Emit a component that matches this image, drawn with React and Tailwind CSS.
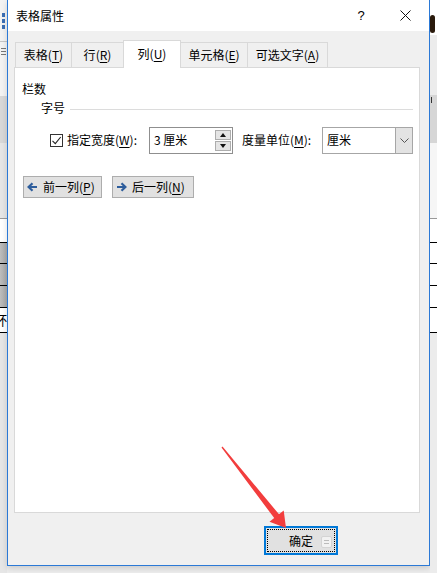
import React from 'react';

const Mn = ({ children }) => <span className="underline underline-offset-2 decoration-1">{children}</span>;

const tabs = [
  { label: '表格', key: 'T', w: 'w-[57px]' },
  { label: '行', key: 'R', w: 'w-[53px]' },
  { label: '列', key: 'U', w: 'w-[58px]', active: true },
  { label: '单元格', key: 'E', w: 'w-[68px]' },
  { label: '可选文字', key: 'A', w: 'w-[81px]' },
];

const SideLeft = () => (
  <div className="w-[7px] flex flex-col shrink-0">
    <div className="h-[41px] bg-[#f3f3f3] flex flex-col items-center gap-[2px] pt-[13px]">
      <div className="w-[3px] h-[4px] bg-[#3c6fb4]" />
      <div className="w-[3px] h-[4px] bg-[#3c6fb4]" />
      <div className="w-[3px] h-[4px] bg-[#3c6fb4]" />
    </div>
    <div className="h-px bg-[#c6c6c6]" />
    <div className="h-[54px] bg-[#f3f3f3] flex flex-col gap-[2px] pt-[6px] pl-[1px]">
      <div className="w-[5px] h-px bg-[#777]" />
      <div className="w-[5px] h-px bg-[#777]" />
      <div className="w-[5px] h-px bg-[#777]" />
    </div>
    <div className="h-[47px] bg-[#d8d8d8]" />
    <div className="h-[75px] bg-[#e6e6e6]" />
    <div className="h-px bg-[#999]" />
    <div className="h-[23px] bg-white" />
    <div className="h-px bg-black" />
    <div className="h-[20px] bg-gradient-to-r from-[#bdbdbd] to-[#a8a8a8]" />
    <div className="h-px bg-black" />
    <div className="h-[21px] bg-gradient-to-r from-[#bdbdbd] to-[#a8a8a8]" />
    <div className="h-px bg-black" />
    <div className="h-[21px] bg-gradient-to-r from-[#bdbdbd] to-[#a8a8a8]" />
    <div className="h-px bg-black" />
    <div className="h-[24px] bg-white overflow-hidden text-[13px] leading-[24px] text-black -indent-[6px]">杯</div>
    <div className="h-px bg-black" />
    <div className="flex-1 bg-[#e6e6e6]" />
  </div>
);

const SideRight = () => (
  <div className="w-[7px] flex flex-col shrink-0">
    <div className="h-[13px] bg-white" />
    <div className="h-[22px] bg-white flex items-center">
      <div className="w-[5px] h-[18px] rounded-sm bg-[#2a1a0c]" />
    </div>
    <div className="h-[60px] bg-[#ececec]" />
    <div className="h-[48px] bg-[#d6d6d6] pt-[2px]">
      <div className="w-px h-[6px] ml-[1px] bg-[#333]" />
    </div>
    <div className="h-[75px] bg-[#f6f6f6]" />
    <div className="h-px bg-[#999]" />
    <div className="h-[23px] bg-white" />
    <div className="h-px bg-black" />
    <div className="h-[20px] bg-white" />
    <div className="h-px bg-black" />
    <div className="h-[21px] bg-white" />
    <div className="h-px bg-black" />
    <div className="h-[21px] bg-white" />
    <div className="h-px bg-black" />
    <div className="h-[24px] bg-white" />
    <div className="h-px bg-black" />
    <div className="flex-1 bg-[#ececec]" />
  </div>
);

const ArrowIcon = ({ dir }) => (
  <svg width="11" height="10" viewBox="0 0 11 10" className="shrink-0">
    {dir === 'left' ? (
      <path d="M10 5H2M5.5 1.2L1.6 5l3.9 3.8" fill="none" stroke="#2d5d9c" strokeWidth="2.2" />
    ) : (
      <path d="M1 5h8M5.5 1.2L9.4 5 5.5 8.8" fill="none" stroke="#2d5d9c" strokeWidth="2.2" />
    )}
  </svg>
);

const App = () => {
  return (
    <div className="relative w-[437px] h-[573px] flex overflow-hidden bg-[#ececec] text-[12px] text-black font-['Noto_Sans_CJK_SC','Liberation_Sans',sans-serif]">
      <SideLeft />

      <div className="w-[423px] h-[566px] shrink-0 flex flex-col border-l border-r border-b border-[#2b79d6] bg-[#f0f0f0] shadow-[0_2px_6px_rgba(0,0,0,0.15)]">
        {/* title bar */}
        <div className="h-[31px] bg-white flex items-center shrink-0">
          <span className="pl-[8px] text-[12px] leading-none">表格属性</span>
          <div className="ml-auto w-[44px] h-full flex items-center justify-center text-[13px] font-['Liberation_Sans',sans-serif]">?</div>
          <div className="w-[45px] h-full mr-px flex items-center justify-center">
            <svg width="11" height="11" viewBox="0 0 11 11">
              <path d="M0.5 0.5l10 10M10.5 0.5l-10 10" stroke="#111" strokeWidth="1" />
            </svg>
          </div>
        </div>

        <div className="flex-1 flex flex-col px-[6px] pt-[9px]">
          {/* tabs */}
          <div className="h-[28px] flex items-end ml-px">
            {tabs.map((t, i) => (
              <div
                key={t.key}
                className={
                  t.active
                    ? `${t.w} h-[28px] relative z-10 -ml-px bg-white border-l border-t border-r border-[#d9d9d9] flex items-center justify-center pb-[2px]`
                    : `${t.w} h-[26px] ${i === 0 ? '' : '-ml-px'} bg-[#f0f0f0] border border-[#d9d9d9] flex items-center justify-center pb-[1px]`
                }
              >
                <span className="leading-none">
                  {t.label}(<Mn>{t.key}</Mn>)
                </span>
              </div>
            ))}
          </div>

          {/* panel */}
          <div className="-mt-px w-[406px] h-[446px] bg-white border border-[#d9d9d9] flex flex-col">
            <div className="mt-[13px] pl-[7px] h-[16px] leading-[16px]">栏数</div>

            <div className="mt-[3px] pl-[26px] pr-[6px] h-[16px] flex items-center">
              <span className="leading-[16px]">字号</span>
              <div className="ml-[5px] flex-1 h-px bg-[#dcdcdc] mt-[2px]" />
            </div>

            <div className="mt-[10px] h-[28px] flex items-center pl-[35px]">
              <div className="w-[13px] h-[13px] border border-[#333] bg-white flex items-center justify-center">
                <svg width="11" height="11" viewBox="0 0 11 11">
                  <path d="M1.5 5.8l2.8 2.8 5.4-6.6" fill="none" stroke="#222" strokeWidth="1.1" />
                </svg>
              </div>
              <span className="ml-[4px] w-[82px] leading-none">
                指定宽度(<Mn>W</Mn>):
              </span>
              <div className="w-[84px] h-[27px] border border-[#8f8f8f] bg-white flex">
                <span className="flex-1 pl-[4px] pt-[4px] leading-[16px]">3 厘米</span>
                <div className="w-[17px] flex flex-col gap-px pt-[2px] pr-[1px]">
                  <div className="h-[10px] bg-[#e5e5e5] border border-[#adadad] flex items-center justify-center">
                    <svg width="6" height="4" viewBox="0 0 6 4"><path d="M0 4h6L3 0z" fill="#111" /></svg>
                  </div>
                  <div className="h-[10px] bg-[#e5e5e5] border border-[#adadad] flex items-center justify-center">
                    <svg width="6" height="4" viewBox="0 0 6 4"><path d="M0 0h6L3 4z" fill="#111" /></svg>
                  </div>
                </div>
              </div>
              <span className="ml-[9px] w-[80px] leading-none">
                度量单位(<Mn>M</Mn>):
              </span>
              <div className="w-[91px] h-[27px] border border-[#a6a6a6] bg-white flex">
                <span className="flex-1 pl-[4px] pt-[4px] leading-[16px]">厘米</span>
                <div className="w-[17px] bg-[#e3e3e3] border-l border-[#a6a6a6] flex items-center justify-center">
                  <svg width="9" height="5" viewBox="0 0 9 5">
                    <path d="M0.5 0.5l4 4 4-4" fill="none" stroke="#555" strokeWidth="1" />
                  </svg>
                </div>
              </div>
            </div>

            <div className="mt-[22px] ml-[8px] flex gap-[10px]">
              <div className="w-[79px] h-[22px] bg-[#e1e1e1] border border-[#adadad] flex items-center pl-[3px] gap-[5px]">
                <ArrowIcon dir="left" />
                <span className="leading-none">
                  前一列(<Mn>P</Mn>)
                </span>
              </div>
              <div className="w-[82px] h-[22px] bg-[#e1e1e1] border border-[#adadad] flex items-center pl-[3px] gap-[5px]">
                <ArrowIcon dir="right" />
                <span className="leading-none">
                  后一列(<Mn>N</Mn>)
                </span>
              </div>
            </div>
          </div>

          {/* footer */}
          <div className="mt-[13px] ml-[250px] w-[74px] h-[29px] border-2 border-[#0078d7] bg-[#e1e1e1] p-px">
            <div className="relative w-full h-full border border-dotted border-black flex items-center justify-center">
              <span className="leading-none">确定</span>
              <div className="absolute right-[2px] top-[6px] w-[11px] h-[12px] rounded-[2px] bg-[#f2f2f2] border border-[#d4d4d4] flex flex-col justify-center gap-[2px] px-[2px]">
                <div className="h-px bg-[#bbb]" />
                <div className="h-px bg-[#bbb]" />
              </div>
            </div>
          </div>
        </div>
      </div>

      <SideRight />

      <svg className="absolute left-0 top-0 pointer-events-none" width="437" height="573" viewBox="0 0 437 573">
        <polygon
          points="222.5,446.6 279,514.3 283.7,510.6 286,528 269.5,521.8 274.2,518.1 221.5,447.4"
          fill="#f23d3d"
        />
      </svg>
    </div>
  );
};

export default App;
